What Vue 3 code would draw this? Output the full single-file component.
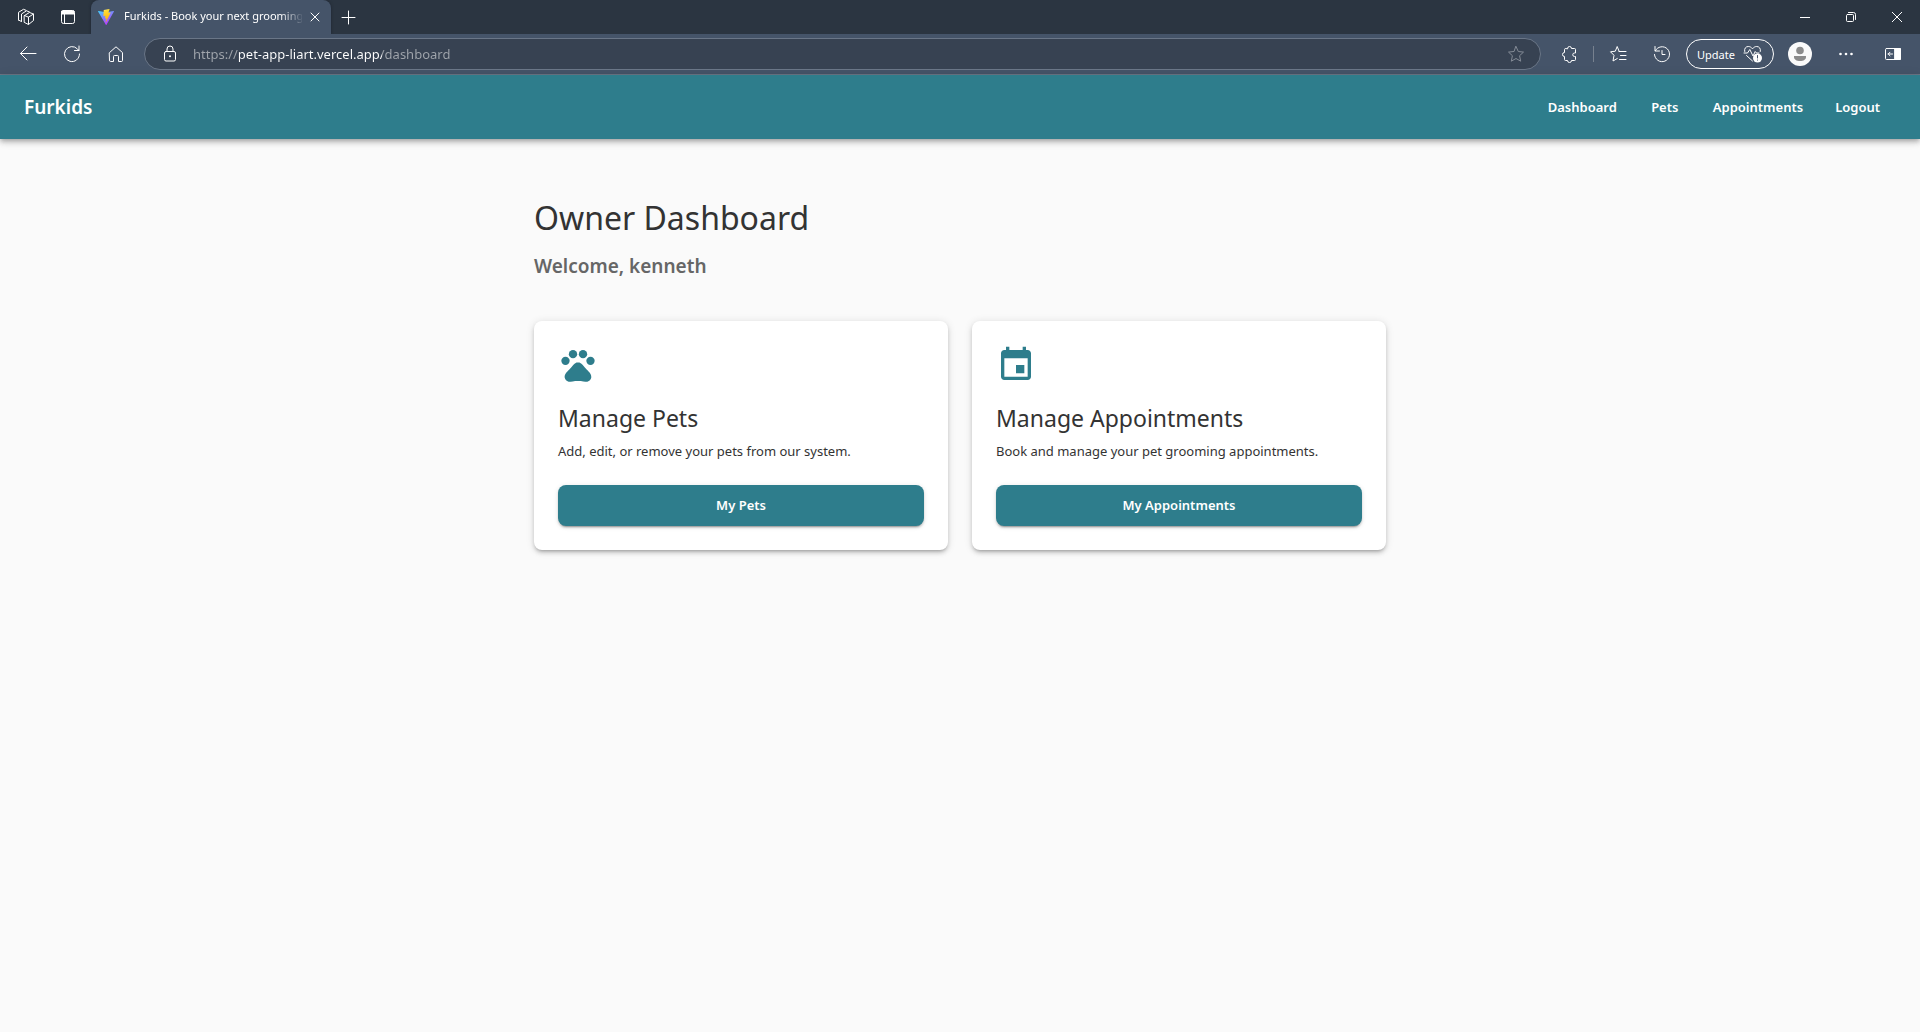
<script setup>
import { ref } from 'vue'

const url = ref('https://pet-app-liart.vercel.app/dashboard')

const navLinks = [
  { label: 'Dashboard', href: '#dashboard' },
  { label: 'Pets', href: '#pets' },
  { label: 'Appointments', href: '#appointments' },
]

const cards = [
  {
    title: 'Manage Pets',
    text: 'Add, edit, or remove your pets from our system.',
    action: 'My Pets',
    icon: 'paw',
  },
  {
    title: 'Manage Appointments',
    text: 'Book and manage your pet grooming appointments.',
    action: 'My Appointments',
    icon: 'calendar',
  },
]
</script>

<template>
  <div class="window">
    <div class="tab-bar">
      <button class="tab-tool" aria-label="Workspaces">
        <svg class="line" width="18" height="18" viewBox="0 0 18 18">
          <path d="M7.500 7.500 12.500 4.500 16.500 6v6.500L11.500 16.500 7.500 14.500ZM7.500 7.500 11.500 9.200v7M11.500 9.200 16.500 6" />
          <path d="M4.500 13.500V6L9.500 2.800 12.500 4" />
          <path d="M1.500 12V4.300L6.500 1.300 9 2.300M1.500 12l2.500 1.300" />
        </svg>
      </button>
      <button class="tab-tool" aria-label="Tab actions">
        <svg class="line" width="16" height="16" viewBox="0 0 16 16">
          <rect x="1.500" y="1.500" width="13" height="13" rx="2" />
          <path d="M2 2h12v3H2z" fill="currentColor" />
          <path d="M4.500 5v9.500" />
        </svg>
      </button>
      <div class="tab">
        <svg width="16" height="16" viewBox="0 0 32 32">
          <defs>
            <linearGradient id="viteBody" x1="0" y1="0" x2="0.6" y2="1">
              <stop offset="0" stop-color="#41d1ff" />
              <stop offset="1" stop-color="#bd34fe" />
            </linearGradient>
            <linearGradient id="viteBolt" x1="0.4" y1="0" x2="0.6" y2="1">
              <stop offset="0" stop-color="#ffea83" />
              <stop offset="0.1" stop-color="#ffdd35" />
              <stop offset="1" stop-color="#ffa800" />
            </linearGradient>
          </defs>
          <path d="M31.9 5.2 17.1 31.6a.9.9 0 0 1-1.5 0L.1 5.2a.9.9 0 0 1 .9-1.3l15 2.7 15-2.7a.9.9 0 0 1 .9 1.3Z" fill="url(#viteBody)" />
          <path d="M22.7.1 11.8 2.2a.4.4 0 0 0-.3.4l-.7 11.3a.4.4 0 0 0 .5.4l3-.7c.3 0 .6.2.5.5l-.9 4.4c0 .3.2.6.5.5l1.9-.6c.3 0 .6.2.5.5l-1.4 7c-.1.4.5.7.7.3l9.1-18.5a.4.4 0 0 0-.5-.6l-3.2.6a.4.4 0 0 1-.5-.5l2.1-6.7a.4.4 0 0 0-.4-.4Z" fill="url(#viteBolt)" />
        </svg>
        <span class="tab-title">Furkids - Book your next grooming</span>
        <button class="tab-close" aria-label="Close tab">
          <svg class="line" width="10" height="10" viewBox="0 0 10 10"><path d="m1 1 8 8M9 1 1 9" /></svg>
        </button>
      </div>
      <button class="new-tab" aria-label="New tab">
        <svg class="line" width="15" height="15" viewBox="0 0 15 15"><path d="M7.500 1v13M1 7.500h13" /></svg>
      </button>
      <div class="window-controls">
        <button aria-label="Minimize">
          <svg class="line" width="10" height="10" viewBox="0 0 10 10"><path d="M0 5.500h10" /></svg>
        </button>
        <button aria-label="Restore">
          <svg class="line" width="10" height="10" viewBox="0 0 10 10">
            <rect x=".5" y="2.500" width="7" height="7" rx="1" />
            <path d="M2.500.5h5a2 2 0 0 1 2 2v5" />
          </svg>
        </button>
        <button aria-label="Close">
          <svg class="line" width="10" height="10" viewBox="0 0 10 10"><path d="m0 0 10 10M10 0 0 10" /></svg>
        </button>
      </div>
    </div>

    <div class="toolbar">
      <button class="tool" aria-label="Back">
        <svg class="line" width="18" height="18" viewBox="0 0 18 18"><path d="M17 8.500H1.500M8 2 1.500 8.500 8 15" /></svg>
      </button>
      <button class="tool" aria-label="Refresh">
        <svg class="line" width="18" height="18" viewBox="0 0 18 18">
          <path d="M16.500 9A7.500 7.500 0 1 1 14.500 4L16 5.500M16 1v4.500h-4.500" />
        </svg>
      </button>
      <button class="tool" aria-label="Home">
        <svg class="line" width="18" height="18" viewBox="0 0 18 18">
          <path d="M2.500 7.600 9 1.800l6.500 5.800v7.900a1 1 0 0 1-1 1h-3v-5a1 1 0 0 0-1-1h-3a1 1 0 0 0-1 1v5h-3a1 1 0 0 1-1-1z" />
        </svg>
      </button>
      <div class="address">
        <button class="lock" aria-label="View site information">
          <svg class="line" width="14" height="18" viewBox="0 0 14 18">
            <rect x="1.500" y="6.500" width="11" height="9.500" rx="1.500" />
            <path d="M4 6.500V4a3 3 0 0 1 6 0v2.500" />
            <circle cx="7" cy="11.300" r="1" fill="currentColor" stroke="none" />
          </svg>
        </button>
        <input v-model="url" class="url" type="text" aria-label="Address" spellcheck="false" />
        <button class="star" aria-label="Add to favorites">
          <svg class="line" width="18" height="18" viewBox="0 0 18 18">
            <path d="m9 1.500 2.300 5 5.200.6-3.900 3.600 1.100 5.500L9 13.500l-4.700 2.700 1.100-5.500L1.500 7.100l5.200-.6z" />
          </svg>
        </button>
      </div>
      <button class="tool" aria-label="Extensions">
        <svg class="line" width="18" height="18" viewBox="0 0 18 18">
          <path d="M7.500 3.500a2 2 0 0 1 4 0h3a1 1 0 0 1 1 1V8h-1a1.500 1.500 0 0 0 0 3.500h1v3a1 1 0 0 1-1 1h-3a2 2 0 0 1-4 0h-2a1 1 0 0 1-1-1v-3a2 2 0 0 1 0-4v-3a1 1 0 0 1 1-1z" />
        </svg>
      </button>
      <span class="divider"></span>
      <button class="tool" aria-label="Favorites">
        <svg class="line" width="18" height="18" viewBox="0 0 18 18">
          <path d="M10 6 8.200 1.500 6.300 6.200 1.500 6.800 5 10.300 4 16l4.300-2.500M10 6.500h7M11.500 10.500H17M10.500 14.500H17" />
        </svg>
      </button>
      <button class="tool" aria-label="History">
        <svg class="line" width="18" height="18" viewBox="0 0 18 18">
          <path d="M2 1.500V6h4.500M2.300 5.800A7.500 7.500 0 1 1 1.500 9.500M9 5.500v4h3" />
        </svg>
      </button>
      <button class="update">
        <span>Update</span>
        <svg class="line" width="20" height="18" viewBox="0 0 20 18">
          <path d="M1.700 6.500C1 3.500 2.800 1.500 5.300 1.500c1.700 0 3 .8 4.200 2.300C10.700 2.300 12 1.500 13.700 1.500c2.500 0 4.300 2 3.600 5M3.500 10.500l6 5.500M1 8h3.500L6.800 4.500 10 11l2.200-4.500L13.500 8H16" />
          <circle cx="14.500" cy="13" r="4.500" fill="#fff" stroke="none" />
          <path d="M14.500 10.500v2.500M14.500 15v.2" stroke="#46546a" />
        </svg>
      </button>
      <button class="tool" aria-label="Profile">
        <svg width="24" height="24" viewBox="0 0 24 24">
          <circle cx="12" cy="12" r="12" fill="#fafafa" />
          <circle cx="12" cy="8.500" r="3.800" fill="#8b8b8b" />
          <path d="M6 14h12v1c0 2.500-2.500 4-6 4s-6-1.500-6-4z" fill="#8b8b8b" />
        </svg>
      </button>
      <button class="tool more" aria-label="Settings and more">
        <svg width="18" height="18" viewBox="0 0 18 18" fill="currentColor">
          <circle cx="3.500" cy="9" r="1.300" /><circle cx="9" cy="9" r="1.300" /><circle cx="14.500" cy="9" r="1.300" />
        </svg>
      </button>
      <button class="tool sidebar" aria-label="Sidebar">
        <svg class="line" width="18" height="14" viewBox="0 0 18 14">
          <rect x="1.500" y="1.500" width="15" height="11" rx="1" />
          <path d="M11 1.500h5.500v11H11z" fill="currentColor" />
          <path d="M8.500 7H4M6 5.200 4.200 7 6 8.800" />
        </svg>
      </button>
    </div>

    <header class="app-bar">
      <a class="brand" href="#home">Furkids</a>
      <nav class="nav">
        <a v-for="link in navLinks" :key="link.label" class="nav-item" :href="link.href">{{ link.label }}</a>
        <button class="nav-item logout">Logout</button>
      </nav>
    </header>

    <main class="content">
      <h1>Owner Dashboard</h1>
      <p class="welcome">Welcome, kenneth</p>
      <div class="cards">
        <section v-for="card in cards" :key="card.title" class="card">
          <svg class="card-icon" viewBox="0 0 24 24" fill="currentColor" aria-hidden="true">
            <template v-if="card.icon === 'paw'">
              <circle cx="4.500" cy="9.500" r="2.500" />
              <circle cx="9" cy="5.500" r="2.500" />
              <circle cx="15" cy="5.500" r="2.500" />
              <circle cx="19.500" cy="9.500" r="2.500" />
              <path d="M17.340 14.860c-.87-1.020-1.600-1.890-2.480-2.910-.46-.54-1.050-1.080-1.750-1.320-.11-.04-.22-.07-.33-.09-.25-.04-.52-.04-.78-.04s-.53 0-.79.05c-.11.02-.22.05-.33.09-.7.24-1.280.78-1.750 1.320-.87 1.020-1.600 1.890-2.480 2.910-1.310 1.310-2.920 2.760-2.620 4.790.29 1.020 1.020 2.030 2.330 2.320.73.15 3.060-.44 5.540-.44h.18c2.480 0 4.810.58 5.540.44 1.310-.29 2.040-1.310 2.330-2.320.31-2.040-1.300-3.490-2.610-4.800z" />
            </template>
            <path v-else d="M17 12h-5v5h5zM16 1v2H8V1H6v2H5c-1.110 0-1.990.9-1.990 2L3 19c0 1.100.89 2 2 2h14c1.100 0 2-.9 2-2V5c0-1.100-.9-2-2-2h-1V1zm3 18H5V8h14z" />
          </svg>
          <h2>{{ card.title }}</h2>
          <p>{{ card.text }}</p>
          <button class="action">{{ card.action }}</button>
        </section>
      </div>
    </main>
  </div>
</template>

<style>
body {
  margin: 0;
  background: #fafafa;
}
</style>

<style scoped>
.window {
  min-height: 100vh;
  font-family: "Noto Sans", "Open Sans", sans-serif;
  color: #333;
  background: #fafafa;
}
button {
  padding: 0;
  border: 0;
  background: none;
  color: inherit;
  font: inherit;
  cursor: pointer;
  display: flex;
  align-items: center;
  justify-content: center;
}
.line {
  fill: none;
  stroke: currentColor;
  stroke-width: 1;
  stroke-linecap: round;
  stroke-linejoin: round;
}
.tab-bar {
  display: flex;
  height: 34px;
  padding-left: 5px;
  background: #2b3541;
  color: #fff;
}
.tab-tool {
  width: 42px;
}
.tab {
  display: flex;
  align-items: center;
  box-sizing: border-box;
  width: 240px;
  margin-left: 2px;
  padding: 0 8px 0 7px;
  border-radius: 8px 8px 0 0;
  background: #455469;
  box-shadow: 0 0 3px #1d242e;
  clip-path: inset(0 -4px 0 -4px);
}
.tab-title {
  flex: 1;
  margin-left: 10px;
  overflow: hidden;
  white-space: nowrap;
  font-size: 11px;
  line-height: 16px;
  padding-bottom: 2px;
  mask-image: linear-gradient(to right, #000 156px, transparent 180px);
}
.tab-close {
  width: 16px;
  height: 16px;
  margin-left: 5px;
}
.new-tab {
  width: 35px;
}
.window-controls {
  display: flex;
  margin-left: auto;
}
.window-controls button {
  width: 46px;
}
.toolbar {
  display: flex;
  align-items: center;
  height: 40px;
  padding: 0 5px 0 6px;
  border-bottom: 1px solid #6b7686;
  background: #455469;
  color: #fff;
}
.tool {
  width: 44px;
  height: 36px;
}
.address {
  display: flex;
  flex: 1;
  align-items: center;
  box-sizing: border-box;
  height: 32px;
  margin: 0 6px;
  padding: 0 15px 0 18px;
  border: 1px solid #6a7687;
  border-radius: 16px;
  background: #374252;
}
.lock {
  width: 14px;
}
.url {
  flex: 1;
  min-width: 0;
  margin-left: 16px;
  padding: 0;
  border: 0;
  outline: 0;
  font: inherit;
  font-size: 13px;
  line-height: 20px;
  color: transparent;
  background: linear-gradient(to right, #a0a5ac 46px, #fff 46px 189px, #a0a5ac 189px);
  background-clip: text;
}
.star {
  color: #848b96;
}
.divider {
  width: 1px;
  height: 16px;
  margin: 0 2px;
  background: #77818f;
}
.update {
  box-sizing: border-box;
  width: 88px;
  height: 30px;
  margin: 0 4px 0 2px;
  gap: 8px;
  border: 1px solid #fff;
  border-radius: 15px;
  font-size: 11px;
}
.more {
  margin-left: 2px;
}
.sidebar {
  margin-left: 3px;
}
.app-bar {
  display: flex;
  align-items: center;
  justify-content: space-between;
  height: 64px;
  padding: 0 24px;
  background: #2e7d8c;
  color: #fff;
  box-shadow: 0 2px 4px -1px rgba(0, 0, 0, 0.2), 0 4px 5px rgba(0, 0, 0, 0.14), 0 1px 10px rgba(0, 0, 0, 0.12);
}
.brand {
  color: inherit;
  text-decoration: none;
  font-size: 19px;
  font-weight: 600;
  line-height: 32px;
}
.nav {
  display: flex;
  gap: 8px;
}
.nav-item {
  box-sizing: border-box;
  min-width: 64px;
  padding: 6px 8px;
  color: inherit;
  text-align: center;
  text-decoration: none;
  font-size: 13px;
  font-weight: 600;
  line-height: 24px;
}
.logout {
  padding: 6px 16px;
}
.content {
  box-sizing: border-box;
  max-width: 900px;
  margin: 0 auto;
  padding: 58px 24px;
}
h1 {
  margin: 0 0 11px;
  font-size: 32px;
  font-weight: 400;
  line-height: 42px;
}
.welcome {
  margin: 0 0 39px;
  font-size: 19px;
  font-weight: 600;
  line-height: 32px;
  color: #666;
}
.cards {
  display: grid;
  grid-template-columns: 1fr 1fr;
  gap: 24px;
}
.card {
  display: flex;
  flex-direction: column;
  padding: 24px;
  border-radius: 8px;
  background: #fff;
  box-shadow: 0 3px 3px -2px rgba(0, 0, 0, 0.2), 0 3px 4px rgba(0, 0, 0, 0.14), 0 1px 8px rgba(0, 0, 0, 0.12);
}
.card-icon {
  width: 40px;
  height: 40px;
  margin-bottom: 17px;
  color: #2e7d8c;
}
h2 {
  margin: 0 0 7px;
  font-size: 23px;
  font-weight: 400;
  line-height: 32px;
}
.card p {
  margin: 0 0 24px;
  font-size: 13px;
  line-height: 20px;
}
.action {
  height: 41px;
  padding-bottom: 2px;
  border-radius: 8px;
  background: #2e7d8c;
  color: #fff;
  font-size: 13px;
  font-weight: 600;
  box-shadow: 0 3px 1px -2px rgba(0, 0, 0, 0.2), 0 2px 2px rgba(0, 0, 0, 0.14), 0 1px 5px rgba(0, 0, 0, 0.12);
}
</style>
